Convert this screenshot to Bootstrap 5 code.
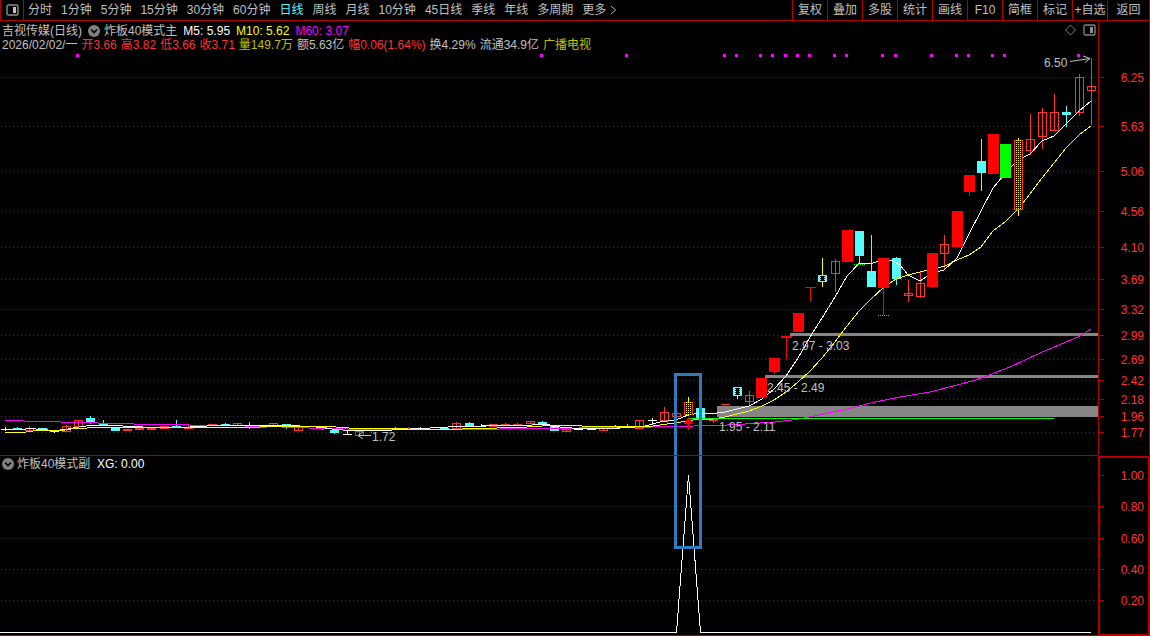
<!DOCTYPE html>
<html lang="zh-CN">
<head>
<meta charset="utf-8">
<meta name="viewport" content="width=device-width, initial-scale=1">
<title>吉视传媒 日线</title>
<link href="https://cdn.jsdelivr.net/npm/bootstrap@5.3.0/dist/css/bootstrap.min.css" rel="stylesheet">
<style>
  :root { --line: #b00000; --ink: #c0c0c0; --rise: #ff3232; --fall: #54fcfc; }
  body { background: #000; color: var(--ink); font: 12px/14px "Liberation Sans", "Noto Sans CJK SC", sans-serif; }
  .topbar { height: 21px; border: 1px solid var(--line); border-top: 0; line-height: 21px; }
  .topbar a { color: var(--ink); }
  .topbar a.active { color: var(--fall); }
  .periods { gap: 9px; padding-left: 4px; }
  .topbar button { background: none; color: var(--ink); border: 0; border-left: 1px solid var(--line); padding: 0; width: 35px; }
  .topbar .layout-btn { border-left: 0; border-right: 1px solid var(--line); width: 23px; line-height: 0; }
  .topbar .back-btn { width: 42px; }
  .legend-rows { top: 3px; left: 2px; }
  .legend-rows > div { height: 14px; }
  .legend-tools { top: 3px; right: 54px; gap: 6px; }
  .quote-row { gap: 4px; }
  .name-row { gap: 6px; }
  .c-rise { color: var(--rise); }
  .c-vol { color: #c0c000; }
  .c-m5 { color: #fff; }
  .c-m10 { color: #ff0; }
  .c-m60 { color: #f0f; }
  .chart text { font-size: 12px; fill: var(--ink); }
  .chart .label-on { fill: #fff; }
  .chart .scale text { fill: var(--rise); text-anchor: end; }
  .chart .grid-line { stroke: #c00000; stroke-dasharray: 1 3; shape-rendering: crispEdges; }
  .chart .tick { stroke: var(--line); }
  .chart .ma { fill: none; stroke-width: 1; shape-rendering: crispEdges; }
</style>
</head>
<body>
<header class="topbar d-flex justify-content-between text-nowrap">
  <div class="d-flex">
    <button type="button" class="layout-btn" aria-label="布局"><svg width="13" height="12" viewBox="0 0 13 12"><rect x="1" y="1" width="11" height="10" rx="1.5" fill="none" stroke="#909090" stroke-width="1.4"/><rect x="7" y="3" width="3" height="6" fill="#c0c0c0"/></svg></button>
    <nav class="d-flex periods" aria-label="周期">
      <a class="text-decoration-none" href="#">分时</a>
      <a class="text-decoration-none" href="#">1分钟</a>
      <a class="text-decoration-none" href="#">5分钟</a>
      <a class="text-decoration-none" href="#">15分钟</a>
      <a class="text-decoration-none" href="#">30分钟</a>
      <a class="text-decoration-none" href="#">60分钟</a>
      <a class="text-decoration-none active" href="#" aria-current="page">日线</a>
      <a class="text-decoration-none" href="#">周线</a>
      <a class="text-decoration-none" href="#">月线</a>
      <a class="text-decoration-none" href="#">10分钟</a>
      <a class="text-decoration-none" href="#">45日线</a>
      <a class="text-decoration-none" href="#">季线</a>
      <a class="text-decoration-none" href="#">年线</a>
      <a class="text-decoration-none" href="#">多周期</a>
      <a class="text-decoration-none d-flex align-items-center" href="#">更多<svg class="ms-1" width="7" height="10" viewBox="0 0 7 10"><path d="M1 1l4.5 4L1 9" fill="none" stroke="#c0c0c0"/></svg></a>
    </nav>
  </div>
  <div class="d-flex">
    <button type="button">复权</button><button type="button">叠加</button><button type="button">多股</button><button type="button">统计</button><button type="button">画线</button><button type="button">F10</button><button type="button">简框</button><button type="button">标记</button><button type="button">+自选</button><button type="button" class="back-btn">返回</button>
  </div>
</header>

<main class="position-relative">
  <div class="legend-rows position-absolute text-nowrap">
    <div class="d-flex name-row">
      <span>吉视传媒(日线)</span>
      <span class="d-flex align-items-center"><svg class="me-1" width="12" height="12" viewBox="0 0 12 12"><circle cx="6" cy="6" r="6" fill="#808080"/><path d="M3 4.5l3 3 3-3" fill="none" stroke="#000" stroke-width="1.6"/></svg>炸板40模式主</span>
      <span class="c-m5">M5: 5.95</span>
      <span class="c-m10">M10: 5.62</span>
      <span class="c-m60">M60: 3.07</span>
    </div>
    <div class="d-flex quote-row">
      <span>2026/02/02/一</span>
      <span class="c-rise">开3.66</span>
      <span class="c-rise">高3.82</span>
      <span class="c-rise">低3.66</span>
      <span class="c-rise">收3.71</span>
      <span class="c-vol">量149.7万</span>
      <span>额5.63亿</span>
      <span class="c-rise">幅0.06(1.64%)</span>
      <span>换4.29%</span>
      <span>流通34.9亿</span>
      <span class="c-vol">广播电视</span>
    </div>
  </div>
  <div class="legend-tools position-absolute d-flex">
    <svg width="13" height="12" viewBox="0 0 13 12"><path d="M6.500 1l5 5-5 5-5-5z" fill="none" stroke="#808080"/></svg>
    <svg width="13" height="12" viewBox="0 0 13 12"><rect x="1" y="1" width="11" height="10" rx="1.500" fill="none" stroke="#808080" stroke-width="1.400"/><rect x="7" y="3" width="3" height="6" fill="#909090"/></svg>
  </div>

  <svg class="chart d-block w-100" viewBox="0 21 1150 615" role="img" aria-label="日K线图">
    <g id="grid"></g>
    <g fill="#868686">
      <rect x="790" y="333" width="308" height="3"/>
      <rect x="765" y="375" width="333" height="3"/>
      <rect x="717" y="406" width="381" height="11"/>
    </g>
    <g id="markers" fill="#f0f" shape-rendering="crispEdges"></g>
    <g id="candles" shape-rendering="crispEdges"></g>

    <!-- moving averages -->
    <polyline class="ma" stroke="#f0f" points="5,420.5 12,420.5 36,421.5 85,422.500 110,423.500 157,424.500 220,425.500 270,426.500 293,427.500 325,428.500 370,429.500 475,429.500 525,428.500 633,427.500 670,426.500 718,425.500 745,424 775,422 792,420 804,418 843,410 875,402 900,397 930,392 976,380 1010,367 1040,353 1066,342 1080,336 1091,329"/>
    <polyline class="ma" stroke="#fff" points="1,429.500 22,429.500 30,428.500 42,429.500 54,430.500 66,429.500 75,427.500 90,425.500 110,425.500 135,426.500 150,427.500 180,427.500 200,426.500 215,425.500 290,425.500 310,426.500 322,427.500 335,429.500 350,430.500 385,430.500 400,429.500 440,427.500 456,426.500 475,426.500 490,425.500 517,425.500 548,424.500 554,426.500 578,428.500 605,428.500 630,427.500 645,426 660,422 676,420 688,415 697,413.500 713,413.500 725,412 749,406 762,399 774,389 786,376 798,358 810,337 822,318 835,297 847,276 859,263.500 871,263.500 883,260 893,261 900,265 908,275 920,281 932,273 944,270 957,258 969,234 981,211 993,188 1003,176 1013,165 1020,159 1030,154 1042,141 1054,136 1066,124 1079,111 1091,101"/>
    <polyline class="ma" stroke="#ff0" points="5,432.500 23,432.500 36,430.500 61,430.500 75,428.500 100,427.500 230,427.500 290,426.500 330,426.500 355,428.500 400,428.500 415,429.500 450,429.500 475,428.500 520,427.500 550,425.500 563,425.500 600,426.500 650,426.500 667,424 681,422 693,420 713,419 725,417 737,414 749,411 762,406 774,400 786,392 798,382 810,371 822,358 835,342 847,326 859,311 871,299 883,288 896,279 908,275 920,272 945,266 957,260 969,255 981,247 993,231 1005,222 1018,209 1030,194 1042,178 1054,163 1066,148 1079,135 1091,126"/>
    <g id="blocks" shape-rendering="crispEdges"></g>
    <path d="M688 418.500H1054" stroke="#0f0" shape-rendering="crispEdges"/>
    <path d="M854 264.500h12M878 315.500h12" stroke="#0f0" stroke-dasharray="1 1" shape-rendering="crispEdges"/>
    <path d="M688.500 417l5 7h-4v6h-2v-6h-4z" fill="red"/>

    <!-- price notes -->
    <g>
      <text x="1044" y="67">6.50</text>
      <text x="372" y="441">1.72</text>
      <text x="792" y="350">2.97 - 3.03</text>
      <text x="767" y="392">2.45 - 2.49</text>
      <text x="719" y="431">1.95 - 2.11</text>
      <path d="M1070 61.500L1090 58.500M1083 56l7 2.500-5 4M371 435.500H358M363 432l-5 3.500 5 3.500" fill="none" stroke="#c0c0c0"/>
    </g>

    <!-- lower indicator -->
    <circle cx="8" cy="464" r="6" fill="#808080"/>
    <path d="M5 462.500l3 3 3-3" fill="none" stroke="#000" stroke-width="1.600"/>
    <text x="17" y="468">炸板40模式副</text>
    <text class="label-on" x="97" y="468">XG: 0.00</text>
    <path d="M0 632.500H676.500L688.500 475L700.500 632.500H1091" fill="none" stroke="#fff" shape-rendering="crispEdges"/>
    <rect x="675.500" y="374.500" width="25" height="173" fill="none" stroke="#2e7cc0" stroke-width="3"/>

    <!-- frame -->
    <path d="M0 455.500H1098M0 635.500H1098M1098.500 21V455M1149.500 21V455" stroke="#b00000" fill="none"/>
    <rect x="1099" y="457" width="50" height="178" fill="none" stroke="#b00000" stroke-width="2"/>
    <g id="scale" class="scale"></g>
  </svg>
</main>

<script src="https://cdn.jsdelivr.net/npm/bootstrap@5.3.0/dist/js/bootstrap.bundle.min.js"></script>
<script>
  const NS = 'http://www.w3.org/2000/svg';
  const add = (id, tag, attrs, text) => {
    const el = document.createElementNS(NS, tag);
    for (const k in attrs) el.setAttribute(k, attrs[k]);
    if (text) el.textContent = text;
    document.getElementById(id).appendChild(el);
  };

  // scale value, height on the chart, whether a grid line is drawn
  const levels = [['6.25',77,1],['5.63',126,1],['5.06',171,1],['4.56',211,1],['4.10',247,1],['3.69',279,1],['3.32',309,1],
    ['2.99',335,1],['2.69',359,1],['2.42',380,1],['2.18',399,1],['1.96',416,1],['1.77',432,1],
    ['1.00',475,0],['0.80',506,1],['0.60',538,1],['0.40',569,1],['0.20',600,1]];
  for (const [label, y, grid] of levels) {
    if (grid) add('grid', 'path', { d: `M1 ${y + .5}H1095`, class: 'grid-line' });
    add('scale', 'path', { d: `M1099 ${y + .5}h5`, class: 'tick' });
    add('scale', 'text', { x: 1144, y: y + 5 }, label);
  }
  for (const y of [491, 522, 554, 585]) add('scale', 'path', { d: `M1099 ${y + .5}h2`, class: 'tick' });

  for (const x of [76,540,625,723,735,759,771,784,796,808,833,845,881,894,930,955,967,991,1003,1077])
    add('markers', 'rect', { x, y: 54, width: 3, height: 3 });

  // kind, body top, body bottom, wick top, wick bottom
  // r hollow rise, f flat rise, c fall, w doji, R limit-up block, G green block, s / t signal bars
  const bars = [
    ['w',429,430,427,431],['c',428,429,427,429],['r',428,431,426,431],['c',428,430,428,430],['w',431,432,431,433],
    ['r',426,432,425,432],['r',420,427,420,427],['c',418,422,416,424],['c',424,426,420,426],['c',427,431,427,431],
    ['f',429,431,429,431],['f',428,430,427,430],['f',428,430,428,430],['r',426,429,426,429],['c',426,428,420,428],
    ['f',427,429,424,429],['f',426,427,426,427],['f',424,426,424,426],['c',424,426,423,426],['r',423,426,423,426],
    ['c',426,427,422,429],['r',425,428,425,428],['r',423,426,423,426],['c',424,427,424,429],['r',426,431,426,431],
    ['c',426,427,426,427],['c',426,428,426,430],['c',430,433,430,434],['w',434,435,431,435],['r',431,436,431,436],
    ['f',430,431,430,433],['f',428,429,428,429],['c',428,430,427,430],['f',428,430,427,430],['w',428,429,427,429],
    ['c',429,430,429,430],['c',428,429,428,429],['r',423,429,422,429],['c',423,426,422,427],['w',426,427,424,427],
    ['r',424,427,424,427],['f',424,426,423,426],['f',424,426,423,426],['r',421,424,421,424],['c',422,425,421,425],
    ['c',426,431,426,431],['r',429,432,429,432],['w',429,430,429,430],['w',429,430,429,430],['r',428,431,428,431],
    ['w',428,429,425,429],['c',427,428,424,428],['r',420,429,420,429],['w',420,421,418,423],['r',412,421,407,421],
    ['r',413,417,413,417],['s',402,415,397,416],['c',408,418,408,420],['f',419,421,419,423],['f',404,405,404,405],
    ['t',387,396,387,399],['r',395,402,391,405],['R',378,398,378,398],['R',358,372,358,374],['R',336,338,336,359],
    ['R',313,332,313,332],['R',287,288,287,302],['t',275,282,258,287],['r',261,274,259,292],['R',230,262,230,262],
    ['c',231,256,231,264],['c',271,287,235,287],['R',258,288,258,315],['c',258,279,257,285],['r',293,296,280,302],
    ['r',283,297,272,298],['R',253,287,253,288],['r',244,254,235,270],['R',211,247,211,247],['R',175,192,175,196],
    ['c',161,173,139,191],['R',134,174,134,174],['G',144,178,144,178],['s',140,210,138,216],['r',139,151,114,155],
    ['r',112,137,108,149],['r',112,131,94,131],['c',112,115,106,127],['r',77,113,74,116],['r',86,91,58,125]
  ];
  const ink = { r: '#ff3232', f: '#ff3232', c: '#54fcfc', w: '#fff', R: '#f00', G: '#0f0', s: '#ff3232', t: '#54fcfc' };
  bars.forEach(([kind, top, bottom, high, low], i) => {
    const x = Math.round(5 + 12.2 * i), wide = kind === 'R' || kind === 'G';
    const layer = wide || kind === 's' ? 'blocks' : 'candles', half = wide ? 5 : 4, color = ink[kind];
    const signal = kind === 's' || kind === 't';
    add(layer, 'rect', { x, y: high, width: 1, height: low - high, fill: signal ? '#ff0' : color });
    const hollow = kind === 'r' || kind === 's';
    if (hollow) add(layer, 'rect', { x: x - half + .5, y: top + .5, width: half * 2, height: bottom - top - 1, fill: kind === 's' ? '#000' : 'none', stroke: color });
    else add(layer, 'rect', { x: x - half, y: top, width: half * 2 + 1, height: bottom - top, fill: color });
    if (signal) {
      if (kind === 't') add(layer, 'rect', { x: x - 2, y: top + 1, width: 5, height: bottom - top - 2, fill: '#000' });
      for (const dx of kind === 's' ? [-2, 0, 2] : [-2, 2])
        add(layer, 'path', { d: `M${x + dx + .5} ${top}V${bottom}`, stroke: '#ff0', 'stroke-dasharray': '1 1' });
    }
  });
</script>
</body>
</html>
